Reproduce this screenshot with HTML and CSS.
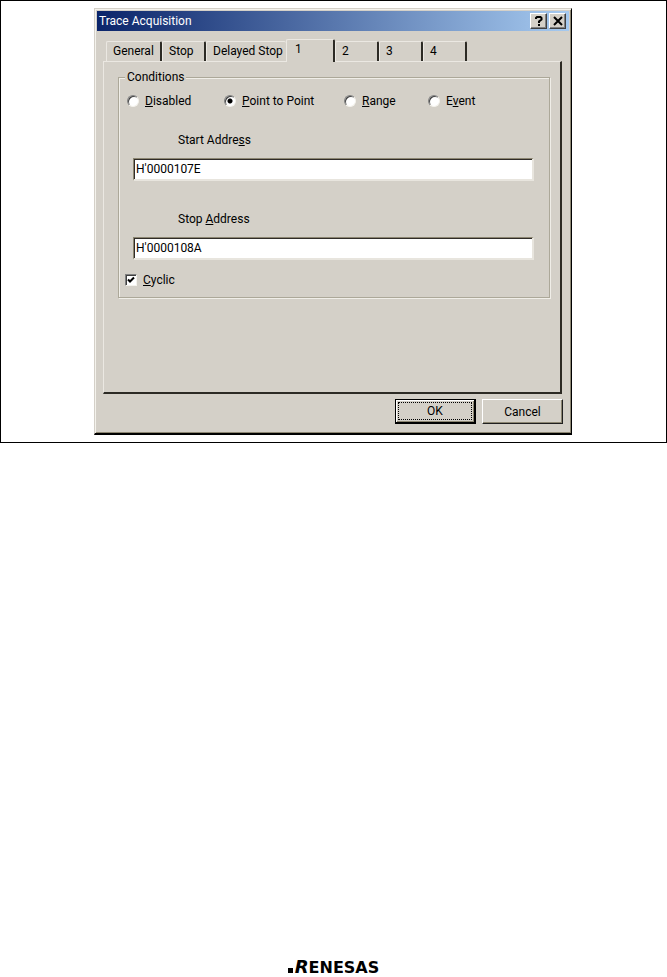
FILE: index.html
```html
<!DOCTYPE html>
<html lang="en">
<head>
    <meta charset="UTF-8">
    <title>Trace Acquisition</title>
    <link rel="stylesheet" href="styles.css">
</head>
<body>
<main class="figure">
    <form class="dialog">
        <div class="titlebar">
            <h1>Trace Acquisition</h1>
            <button type="button" class="caption-btn" aria-label="Help">
                <svg width="12" height="12" viewBox="0 0 12 12"><path d="M3 4V3L4 2H7.500L8.500 3V4.500L6 6.500V8" fill="none" stroke="#000" stroke-width="2"/><path d="M5 9h2v2H5z"/></svg>
            </button>
            <button type="button" class="caption-btn" aria-label="Close">
                <svg width="12" height="12" viewBox="0 0 12 12"><path d="M2 2l8 8M10 2l-8 8" stroke="#000" stroke-width="2"/></svg>
            </button>
        </div>
        <div class="tabs" role="tablist">
            <button type="button" role="tab" class="tab tab-general">General</button>
            <button type="button" role="tab" class="tab">Stop</button>
            <button type="button" role="tab" class="tab tab-delayed">Delayed Stop</button>
            <button type="button" role="tab" class="tab current" aria-selected="true">1</button>
            <button type="button" role="tab" class="tab">2</button>
            <button type="button" role="tab" class="tab">3</button>
            <button type="button" role="tab" class="tab">4</button>
        </div>
        <div class="panel" role="tabpanel">
            <fieldset class="group">
                <legend>Conditions</legend>
                <div class="modes">
                    <label><input type="radio" name="mode"><span><u>D</u>isabled</span></label>
                    <label><input type="radio" name="mode" checked><span><u>P</u>oint to Point</span></label>
                    <label><input type="radio" name="mode"><span><u>R</u>ange</span></label>
                    <label><input type="radio" name="mode"><span>E<u>v</u>ent</span></label>
                </div>
                <div class="field">
                    <label for="start">Start Addre<u>s</u>s</label>
                    <input type="text" id="start" value="H'0000107E">
                </div>
                <div class="field">
                    <label for="stop">Stop <u>A</u>ddress</label>
                    <input type="text" id="stop" value="H'0000108A">
                </div>
                <label class="cyclic"><input type="checkbox" checked><span><u>C</u>yclic</span></label>
            </fieldset>
        </div>
        <div class="actions">
            <button type="button" class="btn default"><span>OK</span></button>
            <button type="button" class="btn"><span>Cancel</span></button>
        </div>
    </form>
</main>
<footer class="footer">
    <div class="logo">
        <svg width="7" height="5" viewBox="0 0 7 5"><path d="M0 0h5v5H0z"/></svg>
        <span class="logo-first">R</span><span>ENESAS</span>
    </div>
</footer>
</body>
</html>
```

FILE: styles.css
```css
* {
    box-sizing: border-box;
    margin: 0;
    padding: 0;
}

body {
    display: flex;
    flex-direction: column;
    min-height: 100vh;
    background: #fff;
    color: #000;
    font: 12px/16px Roboto, "Liberation Sans", sans-serif;
}

button,
input {
    font: inherit;
    color: inherit;
}

.figure {
    border: 1px solid #000;
    padding: 7px 94px 7px 93px;
}

.dialog {
    padding: 2px;
    background: #d4d0c8;
    border: 1px solid #d4d0c8;
    border-right-color: #000;
    border-bottom: 2px solid #000;
    box-shadow: inset 1px 1px #f4f2ec, inset -1px -1px #8c8672;
}

/* title bar */
.titlebar {
    display: flex;
    align-items: center;
    height: 20px;
    padding: 0 3px 0 2px;
    background: linear-gradient(to right, #0a246a, #a6caf0);
}

.titlebar h1 {
    flex: 1;
    font-size: 12px;
    font-weight: normal;
    color: #fff;
}

.caption-btn {
    display: flex;
    align-items: center;
    justify-content: center;
    width: 17px;
    height: 16px;
    margin-left: 2px;
    background: #d4d0c8;
    border: 1px solid #fff;
    border-right-color: #404040;
    border-bottom-color: #404040;
    box-shadow: inset -1px -1px #808080;
}

/* tabs */
.tabs {
    display: flex;
    align-items: flex-end;
    height: 30px;
    padding-left: 9px;
}

.tab {
    width: 44px;
    height: 20px;
    padding: 0 0 1px 6px;
    text-align: left;
    background: #d4d0c8;
    border: 1px solid #ebe8e2;
    border-right: 2px solid #2c2a24;
    border-bottom: 0;
    border-radius: 2px 2px 0 0;
}

.tab-general {
    width: 56px;
}

.tab-delayed {
    width: 80px;
    border-right: 0;
}

.tab.current {
    width: 49px;
    height: 23px;
    padding: 0 0 5px 8px;
    margin-bottom: -1px;
    z-index: 1;
}

/* tab page */
.panel {
    height: 333px;
    margin: 0 7px 0 6px;
    padding: 7px 10px 0 14px;
    border: 1px solid #ebe8e2;
    border-right: 2px solid #2c2a24;
    border-bottom: 2px solid #2c2a24;
}

.group {
    padding: 0 15px 9px 6px;
    border: 1px solid #aca899;
    box-shadow: 1px 1px #f0eee8, inset 1px 1px #f0eee8;
}

.group legend {
    padding: 0 2px;
    background: #d4d0c8;
}

.modes {
    display: grid;
    grid-template-columns: 97px 120px 84px 1fr;
    margin: 8px 0 23px 2px;
}

.modes label,
.cyclic {
    display: flex;
    align-items: center;
    gap: 6px;
}

input[type="radio"],
input[type="checkbox"] {
    appearance: none;
    width: 12px;
    height: 12px;
    background: #fff;
    border: 1px solid #808080;
    border-right-color: #f4f2ec;
    border-bottom-color: #f4f2ec;
    box-shadow: inset 1px 1px #404040;
}

input[type="radio"] {
    border-radius: 50%;
}

input[type="radio"]:checked {
    background: radial-gradient(circle, #000 2px, #fff 3px);
}

input[type="checkbox"]:checked {
    background: #fff url("data:image/svg+xml,%3Csvg xmlns='http://www.w3.org/2000/svg' viewBox='0 0 10 10'%3E%3Cpath d='M2 4.500L4 6.500L8 2.500' fill='none' stroke='%23000' stroke-width='2'/%3E%3C/svg%3E") center / 10px no-repeat;
}

.field {
    padding-left: 8px;
    margin-bottom: 30px;
}

.field label {
    display: block;
    margin: 0 0 10px 45px;
}

.field input {
    display: block;
    width: 100%;
    height: 23px;
    padding: 0 2px 1px;
    background: #fff;
    border: 1px solid #8c8672;
    border-right: 2px solid #e8e5de;
    border-bottom: 2px solid #e8e5de;
    box-shadow: inset 1px 1px #302c28;
}

.field + .cyclic {
    margin-top: -18px;
}

/* buttons */
.actions {
    display: flex;
    justify-content: flex-end;
    gap: 6px;
    padding: 5px 6px 7px;
}

.btn {
    width: 81px;
    height: 25px;
    padding: 2px;
    background: #d4d0c8;
    border: 1px solid #fff;
    border-right: 1px solid #202020;
    border-bottom: 1px solid #202020;
    box-shadow: inset -1px -1px #8c8672;
}

.btn span {
    display: block;
    border: 1px solid transparent;
}

.btn.default {
    border: 1px solid #000;
    border-right-width: 2px;
    border-bottom-width: 2px;
    box-shadow: inset 1px 1px #fff, inset -1px -1px #8c8672;
}

.btn.default span {
    border: 1px dotted #000;
}

/* page footer */
.footer {
    display: flex;
    justify-content: center;
    margin-top: auto;
}

.logo {
    display: flex;
    align-items: baseline;
    font: bold 16px/18px "DejaVu Sans", sans-serif;
}

.logo-first {
    font-size: 18px;
    font-style: oblique;
}
```
